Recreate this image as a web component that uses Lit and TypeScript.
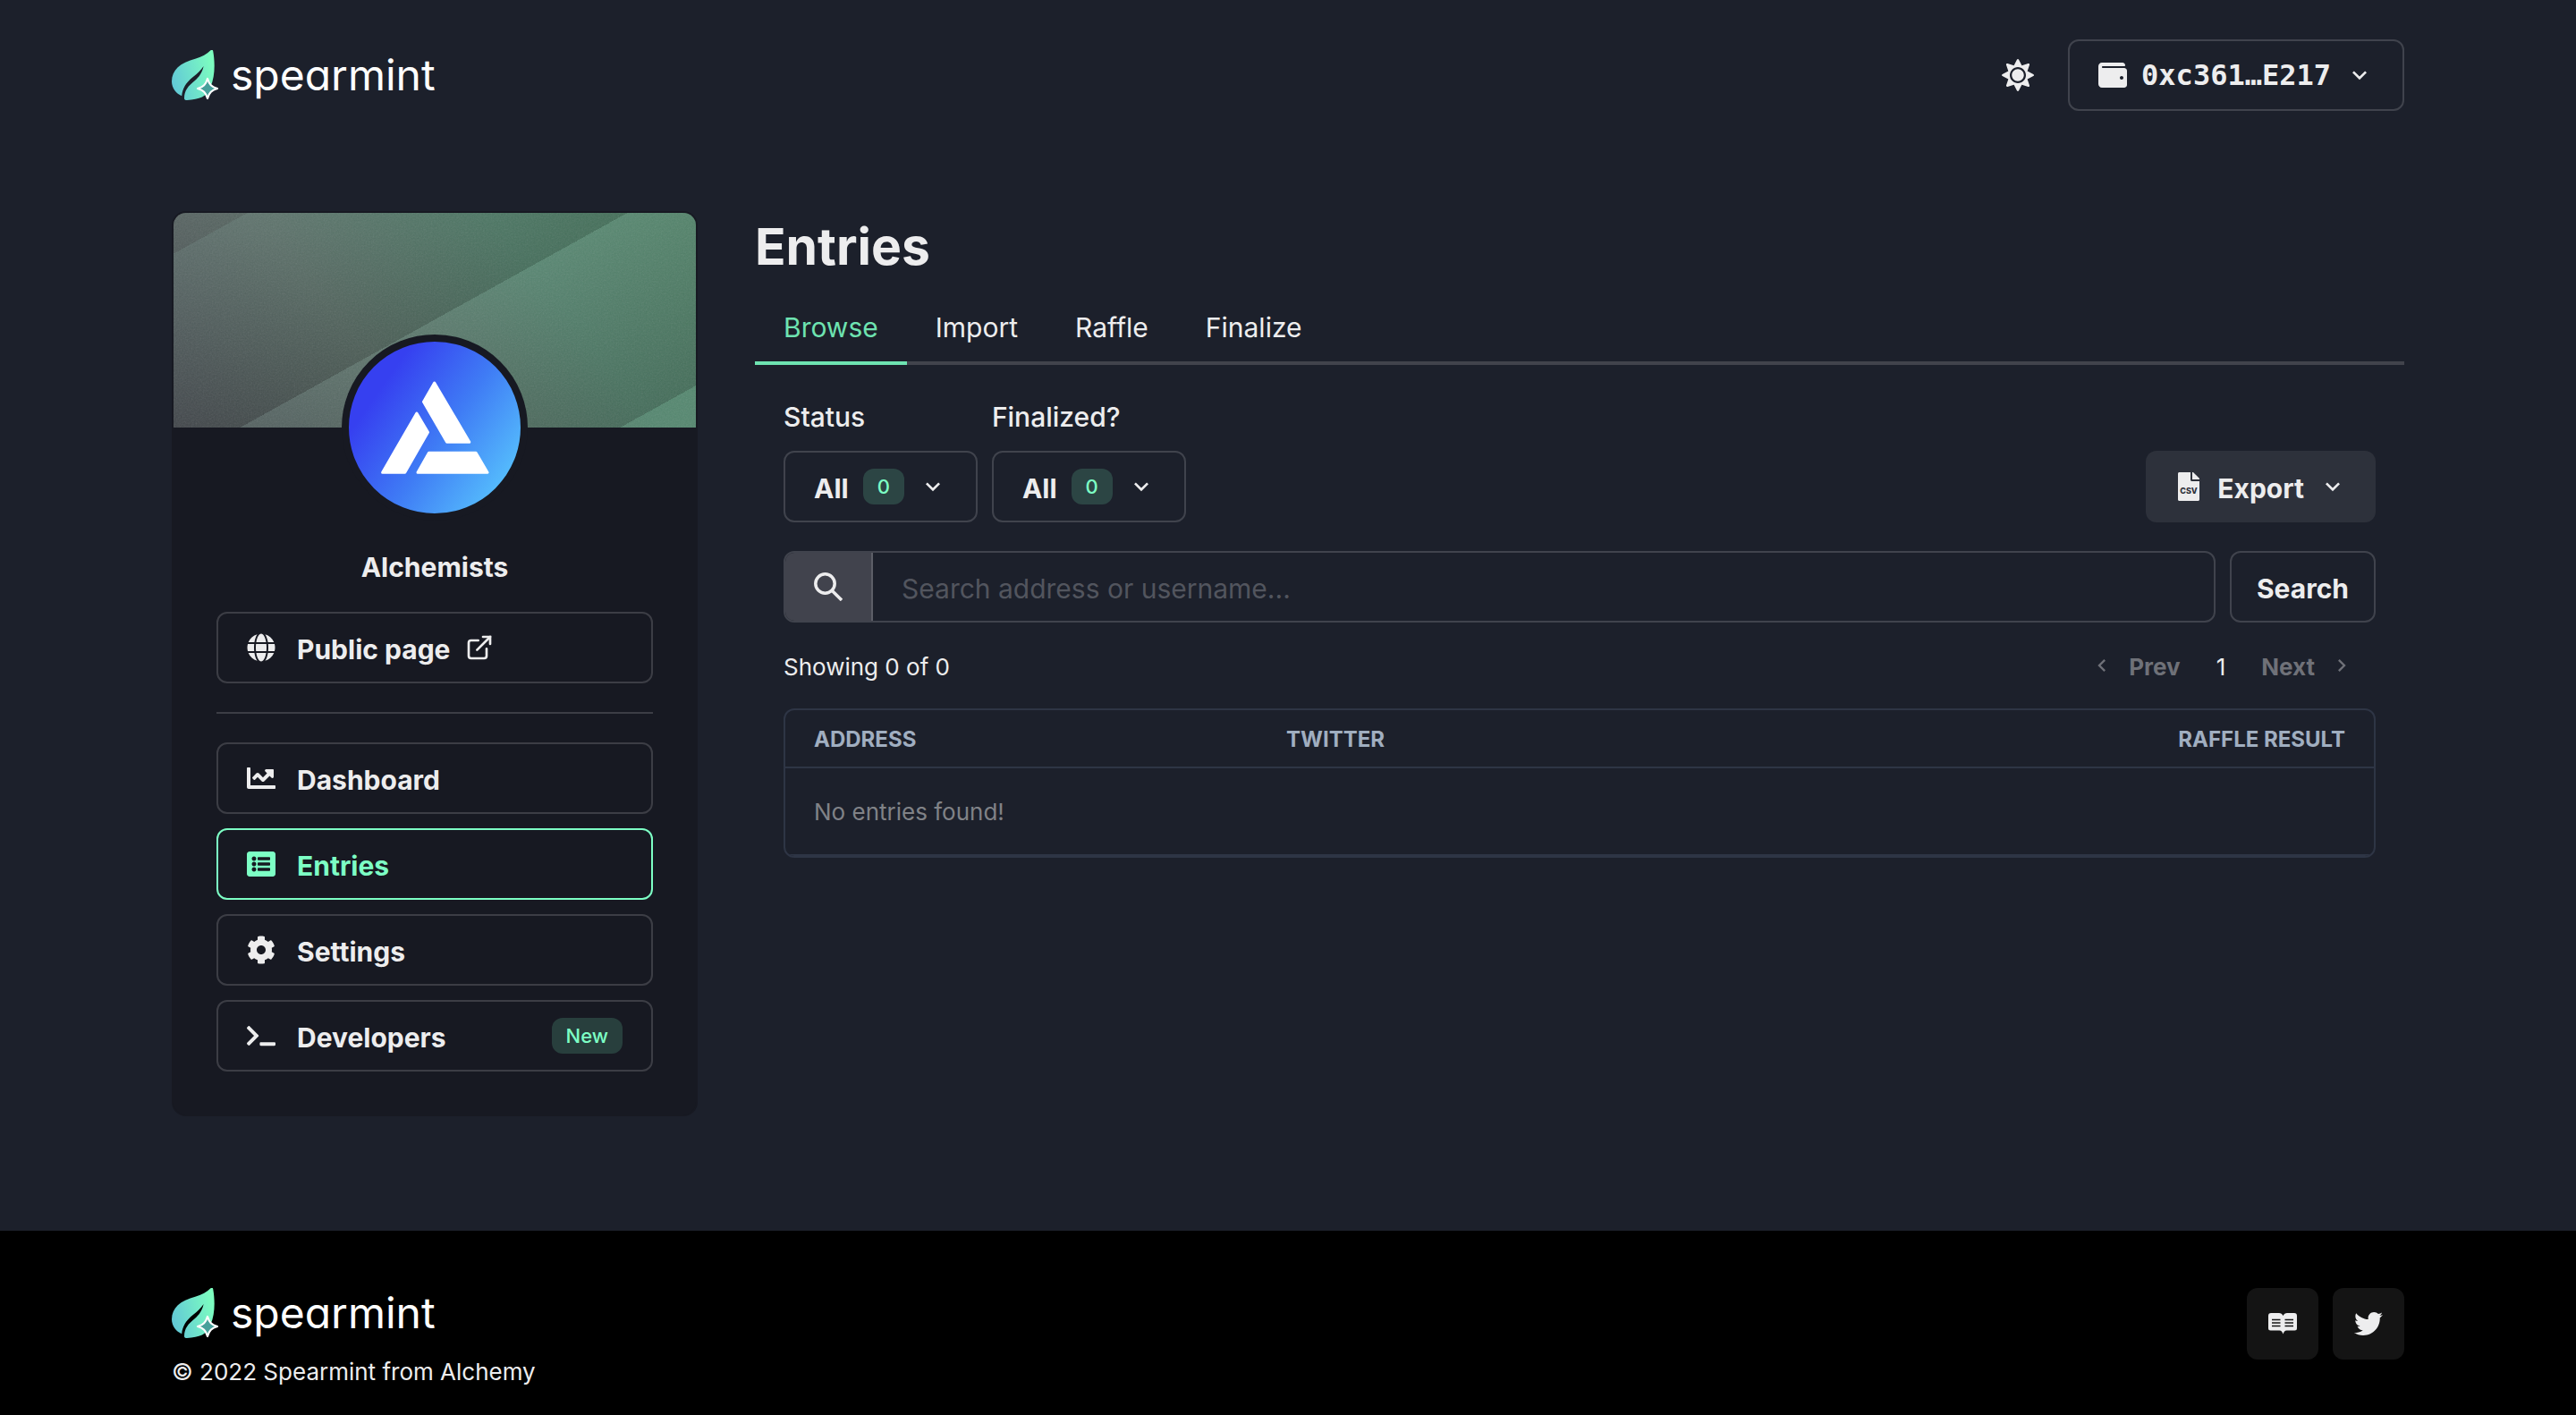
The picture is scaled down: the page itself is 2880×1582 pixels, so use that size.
import { LitElement, html, svg, css, nothing } from "lit";
import { customElement, property } from "lit/decorators.js";
import { classMap } from "lit/directives/class-map.js";

type Glyph = { box: string; d: string };

const glyphs: Record<string, Glyph> = {
  sun: {
    box: "0 0 512 512",
    d: "M256 160c-52.9 0-96 43.1-96 96s43.1 96 96 96 96-43.1 96-96-43.1-96-96-96zm246.4 80.5l-94.7-47.3 33.5-100.4c4.5-13.6-8.4-26.5-21.9-21.9l-100.4 33.5-47.4-94.8c-6.4-12.8-24.6-12.8-31 0l-47.3 94.7L92.7 70.8c-13.6-4.5-26.5 8.4-21.9 21.9l33.5 100.4-94.7 47.4c-12.8 6.4-12.8 24.6 0 31l94.7 47.3-33.5 100.5c-4.5 13.6 8.4 26.5 21.9 21.9l100.4-33.5 47.3 94.7c6.4 12.8 24.6 12.8 31 0l47.3-94.7 100.4 33.5c13.6 4.5 26.5-8.4 21.9-21.9l-33.5-100.4 94.7-47.3c13-6.5 13-24.7.2-31.1zm-155.9 106c-49.9 49.9-131.1 49.9-181 0-49.9-49.9-49.9-131.1 0-181 49.9-49.9 131.1-49.9 181 0 49.9 49.9 49.9 131.1 0 181z",
  },
  wallet: {
    box: "0 0 512 512",
    d: "M461.2 128H80c-8.84 0-16-7.16-16-16s7.16-16 16-16h384c8.84 0 16-7.16 16-16 0-26.51-21.49-48-48-48H64C28.65 32 0 60.65 0 96v320c0 35.35 28.65 64 64 64h397.2c28.02 0 50.8-21.53 50.8-48V176c0-26.47-22.78-48-50.8-48zM416 336c-17.67 0-32-14.33-32-32s14.33-32 32-32 32 14.33 32 32-14.33 32-32 32z",
  },
  globe: {
    box: "0 0 496 512",
    d: "M336.5 160C322 70.7 287.8 8 248 8s-74 62.7-88.5 152h177zM152 256c0 22.2 1.2 43.5 3.3 64h185.3c2.1-20.5 3.3-41.8 3.3-64s-1.2-43.5-3.3-64H155.3c-2.1 20.5-3.3 41.8-3.3 64zm324.7-96c-28.6-67.9-86.5-120.4-158-141.6 24.4 33.8 41.2 84.7 50 141.6h108zM177.2 18.4C105.8 39.6 47.8 92.1 19.3 160h108c8.7-56.9 25.5-107.8 49.9-141.6zM487.4 192H372.7c2.1 21 3.3 42.5 3.3 64s-1.2 43-3.3 64h114.6c5.5-20.5 8.6-41.8 8.6-64s-3.1-43.5-8.5-64zM120 256c0-21.5 1.2-43 3.3-64H8.6C3.2 212.5 0 233.8 0 256s3.2 43.5 8.6 64h114.6c-2-21-3.2-42.5-3.2-64zm39.5 96c14.5 89.3 48.7 152 88.5 152s74-62.7 88.5-152h-177zm159.3 141.6c71.4-21.2 129.4-73.7 158-141.6h-108c-8.8 56.9-25.6 107.8-50 141.6zM19.3 352c28.6 67.9 86.5 120.4 158 141.6-24.4-33.8-41.2-84.7-50-141.6h-108z",
  },
  chart: {
    box: "0 0 512 512",
    d: "M496 384H64V80c0-8.84-7.16-16-16-16H16C7.16 64 0 71.16 0 80v336c0 17.67 14.33 32 32 32h464c8.84 0 16-7.16 16-16v-32c0-8.84-7.16-16-16-16zM464 96H345.94c-21.38 0-32.09 25.85-16.97 40.97l32.4 32.4L288 242.75l-73.37-73.37c-12.5-12.5-32.76-12.5-45.25 0l-68.69 68.69c-6.25 6.25-6.25 16.38 0 22.63l22.62 22.62c6.25 6.25 16.38 6.25 22.63 0L192 237.25l73.37 73.37c12.5 12.5 32.76 12.5 45.25 0l96-96 32.4 32.4c15.12 15.12 40.97 4.41 40.97-16.97V112c.01-8.84-7.15-16-15.99-16z",
  },
  list: {
    box: "0 0 512 512",
    d: "M464 480H48c-26.51 0-48-21.49-48-48V80c0-26.51 21.49-48 48-48h416c26.51 0 48 21.49 48 48v352c0 26.51-21.49 48-48 48zM128 120c-22.091 0-40 17.909-40 40s17.909 40 40 40 40-17.909 40-40-17.909-40-40-40zm0 96c-22.091 0-40 17.909-40 40s17.909 40 40 40 40-17.909 40-40-17.909-40-40-40zm0 96c-22.091 0-40 17.909-40 40s17.909 40 40 40 40-17.909 40-40-17.909-40-40-40zm288-136v-32c0-6.627-5.373-12-12-12H204c-6.627 0-12 5.373-12 12v32c0 6.627 5.373 12 12 12h200c6.627 0 12-5.373 12-12zm0 96v-32c0-6.627-5.373-12-12-12H204c-6.627 0-12 5.373-12 12v32c0 6.627 5.373 12 12 12h200c6.627 0 12-5.373 12-12zm0 96v-32c0-6.627-5.373-12-12-12H204c-6.627 0-12 5.373-12 12v32c0 6.627 5.373 12 12 12h200c6.627 0 12-5.373 12-12z",
  },
  cog: {
    box: "0 0 512 512",
    d: "M487.4 315.7l-42.6-24.6c4.3-23.2 4.3-47 0-70.2l42.6-24.6c4.9-2.8 7.1-8.6 5.5-14-11.1-35.6-30-67.8-54.7-94.6-3.8-4.1-10-5.1-14.8-2.3L380.8 110c-17.9-15.4-38.5-27.3-60.8-35.1V25.8c0-5.6-3.9-10.5-9.4-11.7-36.7-8.2-74.3-7.8-109.2 0-5.5 1.2-9.4 6.1-9.4 11.7V75c-22.2 7.9-42.8 19.8-60.8 35.1L88.7 85.5c-4.9-2.8-11-1.9-14.8 2.3-24.7 26.7-43.6 58.9-54.7 94.6-1.7 5.4.6 11.2 5.5 14L67.3 221c-4.3 23.2-4.3 47 0 70.2l-42.6 24.6c-4.9 2.8-7.1 8.6-5.5 14 11.1 35.6 30 67.8 54.7 94.6 3.8 4.1 10 5.1 14.8 2.3l42.6-24.6c17.9 15.4 38.5 27.3 60.8 35.1v49.2c0 5.6 3.9 10.5 9.4 11.7 36.7 8.2 74.3 7.8 109.2 0 5.5-1.2 9.4-6.1 9.4-11.7v-49.2c22.2-7.9 42.8-19.8 60.8-35.1l42.6 24.6c4.9 2.8 11 1.9 14.8-2.3 24.7-26.7 43.6-58.9 54.7-94.6 1.5-5.5-.7-11.3-5.6-14.1zM256 336c-44.1 0-80-35.9-80-80s35.9-80 80-80 80 35.9 80 80-35.9 80-80 80z",
  },
  terminal: {
    box: "0 0 640 512",
    d: "M257.981 272.971L63.638 467.314c-9.373 9.373-24.569 9.373-33.941 0L7.029 444.647c-9.357-9.357-9.375-24.522-.04-33.901L161.011 256 6.99 101.255c-9.335-9.379-9.317-24.544.04-33.901l22.667-22.667c9.373-9.373 24.569-9.373 33.941 0L257.981 239.03c9.373 9.372 9.373 24.568 0 33.941zM640 456v-32c0-13.255-10.745-24-24-24H312c-13.255 0-24 10.745-24 24v32c0 13.255 10.745 24 24 24h304c13.255 0 24-10.745 24-24z",
  },
  twitter: {
    box: "0 0 512 512",
    d: "M459.37 151.716c.325 4.548.325 9.097.325 13.645 0 138.72-105.583 298.558-298.558 298.558-59.452 0-114.68-17.219-161.137-47.106 8.447.974 16.568 1.299 25.34 1.299 49.055 0 94.213-16.568 130.274-44.832-46.132-.975-84.792-31.188-98.112-72.772 6.498.974 12.995 1.624 19.818 1.624 9.421 0 18.843-1.3 27.614-3.573-48.081-9.747-84.143-51.98-84.143-102.985v-1.299c13.969 7.797 30.214 12.67 47.431 13.319-28.264-18.843-46.781-51.005-46.781-87.391 0-19.492 5.197-37.36 14.294-52.954 51.655 63.675 129.3 105.258 216.365 109.807-1.624-7.797-2.599-15.918-2.599-24.04 0-57.828 46.782-104.934 104.934-104.934 30.213 0 57.502 12.67 76.67 33.137 23.715-4.548 46.456-13.32 66.599-25.34-7.798 24.366-24.366 44.833-46.132 57.827 21.117-2.273 41.584-8.122 60.426-16.243-14.292 20.791-32.161 39.308-52.628 54.253z",
  },
  down: { box: "0 0 24 24", d: "M16.59 8.59L12 13.17 7.41 8.59 6 10l6 6 6-6z" },
  left: { box: "0 0 24 24", d: "M15.41 7.41L14 6l-6 6 6 6 1.41-1.41L10.83 12z" },
  right: { box: "0 0 24 24", d: "M10 6L8.59 7.41 13.17 12l-4.58 4.59L10 18l6-6z" },
};

const drawn: Record<string, { box: string; body: unknown }> = {
  external: {
    box: "0 0 24 24",
    body: svg`<g fill="none" stroke="currentColor" stroke-width="2" stroke-linecap="round">
      <path d="M15 3h6v6" /><path d="M10 14L21 3" />
      <path d="M18 13v6a2 2 0 0 1-2 2H5a2 2 0 0 1-2-2V8a2 2 0 0 1 2-2h6" /></g>`,
  },
  search: {
    box: "0 0 32 32",
    body: svg`<g fill="none" stroke="currentColor" stroke-width="3.5">
      <circle cx="12.5" cy="12.5" r="10.700" /><path d="M20.4 20.4L31 31" /></g>`,
  },
  csv: {
    box: "0 0 24 32",
    body: svg`<path fill="currentColor" d="M14 8.5V0H1.5C.7 0 0 .7 0 1.5v29c0 .8.7 1.5 1.5 1.5h21c.8 0 1.5-.7 1.5-1.5V10h-8.500c-.8 0-1.500-.7-1.500-1.500z" />
      <path fill="currentColor" d="M24 7.600V8h-8V0h.400c.4 0 .8.200 1.100.400l6.100 6.100c.3.300.4.700.4 1.100z" />
      <text x="12" y="24" text-anchor="middle" font-size="9" font-weight="800" fill="#2e303b">CSV</text>`,
  },
  book: {
    box: "0 0 32 24",
    body: svg`<path fill="currentColor" d="M3 0H12C14 0 15.500 1 16.500 3C17.500 1 19 0 21 0H29A3 3 0 0 1 32 3V17A2.500 2.500 0 0 1 29.500 19.500H20.500C18.500 19.500 17.500 21 16.500 23.500C15.500 21 14.500 19.500 12.500 19.500H2.500A2.500 2.500 0 0 1 0 17V3A3 3 0 0 1 3 0Z" />
      <path fill="none" stroke="#141414" stroke-width="1.400" d="M4 7.500H13.500M4 11H13.500M4 14.500H13.500M18.500 7.500H28M18.500 11H28M18.500 14.500H28" />`,
  },
};

@customElement("ui-icon")
class UiIcon extends LitElement {
  @property() name = "";

  static styles = css`
    :host {
      display: inline-flex;
      flex: none;
      width: 32px;
      height: 32px;
    }
    svg {
      width: 100%;
      height: 100%;
      font-family: Inter, "Liberation Sans", sans-serif;
    }
  `;

  render() {
    const glyph = glyphs[this.name];
    const shape = drawn[this.name];
    return html`<svg viewBox=${glyph ? glyph.box : shape.box} aria-hidden="true">
      ${glyph ? svg`<path fill="currentColor" d=${glyph.d} />` : shape.body}
    </svg>`;
  }
}

@customElement("brand-logo")
class BrandLogo extends LitElement {
  static styles = css`
    :host {
      display: block;
    }
    .link {
      display: flex;
      align-items: center;
      gap: 12px;
      width: max-content;
      color: #fff;
      text-decoration: none;
    }
    .leaf {
      width: 54px;
      height: 57px;
      margin-bottom: -1px;
    }
    .word {
      font: 400 48px/56px Inter, "Liberation Sans", sans-serif;
      font-feature-settings: "cv11" 1;
    }
  `;

  render() {
    return html`<a class="link" href="#">
      <svg class="leaf" viewBox="12 16 54 57" aria-hidden="true">
        <defs>
          <linearGradient id="mint" x1="0" y1="0.6" x2="1" y2="0.3">
            <stop offset="0" stop-color="#62c9d6" />
            <stop offset="1" stop-color="#7dffbf" />
          </linearGradient>
        </defs>
        <path
          fill="url(#mint)"
          d="M55.500 16.300C51 20.500 46 23.500 39 25.500C21 30 12 38.500 12 51C12 58.500 17 64.500 23.200 67.300C24 58.500 28 52.500 35.500 46.300C41 42 44.500 38.500 47.600 34C46 41.500 42.500 46 38 50C30.500 56 26 61 26 70C26 71.600 27 72 29 72C43 71 51.500 68.500 55.500 57C60.500 45 60.500 30 58.200 17C57.800 15.500 56.800 15.200 55.500 16.300Z"
        />
        <path
          fill="#47a09b"
          stroke="#fff"
          stroke-width="2.200"
          stroke-linejoin="round"
          d="M52 48C54 54.500 56.500 57 63 59C56.500 61 54 63.500 52 70C50 63.500 47.500 61 41 59C47.500 57 50 54.500 52 48Z"
        />
      </svg>
      <span class="word">spearmint</span>
    </a>`;
  }
}

const navItems = [
  { label: "Dashboard", icon: "chart", tag: "", active: false },
  { label: "Entries", icon: "list", tag: "", active: true },
  { label: "Settings", icon: "cog", tag: "", active: false },
  { label: "Developers", icon: "terminal", tag: "New", active: false },
];

const tabs = ["Browse", "Import", "Raffle", "Finalize"];

const filters = [
  { id: "status", label: "Status", value: "All", count: 0 },
  { id: "finalized", label: "Finalized?", value: "All", count: 0 },
];

@customElement("app-root")
class AppRoot extends LitElement {
  static styles = css`
    :host {
      display: block;
      --line: rgba(255, 255, 255, 0.16);
      --mint: #7dffc5;
      --text: #ededee;
    }
    * {
      box-sizing: border-box;
    }
    .page {
      display: flex;
      flex-direction: column;
      min-height: 100vh;
      background: #1c202b;
      color: var(--text);
      font: 400 30px/48px Inter, "Liberation Sans", sans-serif;
    }
    .wrap {
      width: 100%;
      max-width: 2560px;
      margin: 0 auto;
      padding: 0 32px;
    }
    .header {
      display: flex;
      align-items: center;
      justify-content: space-between;
      padding-top: 44px;
      padding-bottom: 44px;
    }
    .tools {
      display: flex;
      align-items: center;
      gap: 38px;
    }
    button,
    input {
      margin: 0;
      border: 0;
      padding: 0;
      background: none;
      color: inherit;
      font: inherit;
    }
    .theme {
      display: flex;
    }
    .theme ui-icon {
      width: 36px;
      height: 36px;
    }
    .btn {
      display: flex;
      align-items: center;
      gap: 16px;
      height: 80px;
      padding: 0 32px;
      border: 2px solid var(--line);
      border-radius: 12px;
      color: inherit;
      font-weight: 700;
      text-decoration: none;
    }
    .text {
      padding-top: 4px;
    }
    .wallet {
      font-family: "DejaVu Sans Mono", monospace;
      font-size: 32px;
    }
    .main {
      display: flex;
      align-items: flex-start;
      gap: 64px;
      padding-top: 68px;
      padding-bottom: 128px;
    }
    .card {
      flex: none;
      width: 588px;
      border: 2px solid #171922;
      border-radius: 16px;
      background: #171922;
      overflow: hidden;
    }
    .banner {
      height: 240px;
      background: linear-gradient(
          151deg,
          rgba(160, 180, 180, 0.12) 0,
          rgba(130, 150, 150, 0.08) 40px,
          rgba(160, 205, 195, 0.16) 40px,
          rgba(20, 40, 30, 0.14) 246px,
          rgba(150, 205, 185, 0.15) 246px,
          rgba(20, 40, 30, 0.16) 452px,
          rgba(130, 215, 175, 0.14) 452px
        ),
        linear-gradient(52deg, #45464d 0%, #55655f 36%, #4e7a66 70%, #4d7d63 100%);
    }
    .grain {
      display: block;
      width: 100%;
      height: 100%;
      opacity: 0.14;
    }
    .avatar {
      display: block;
      position: relative;
      width: 208px;
      height: 208px;
      margin: -104px auto 28px;
      border: 8px solid #171922;
      border-radius: 50%;
      background: linear-gradient(125deg, #3640f0 22%, #3f7cf5 55%, #57c2fd 90%);
    }
    .team {
      margin: 0 0 26px;
      font-size: 30px;
      line-height: 48px;
      font-weight: 700;
      text-align: center;
    }
    .nav {
      display: flex;
      flex-direction: column;
      gap: 16px;
      padding: 0 48px 48px;
    }
    .nav .btn {
      gap: 24px;
    }
    .nav .public {
      gap: 16px;
    }
    .public ui-icon:first-child {
      margin-right: 8px;
    }
    .rule {
      width: 100%;
      height: 2px;
      margin: 16px 0;
      border: 0;
      background: var(--line);
    }
    .nav .active {
      border-color: var(--mint);
      color: var(--mint);
    }
    .badge {
      padding: 0 16px;
      border-radius: 12px;
      background: rgba(125, 255, 197, 0.17);
      color: var(--mint);
      font-size: 22px;
      line-height: 40px;
      font-weight: 500;
    }
    .nav .badge {
      margin-left: auto;
    }
    .content {
      flex: 1;
      min-width: 0;
    }
    .title {
      margin: 0 0 8px;
      font-size: 57px;
      line-height: 80px;
      font-weight: 700;
    }
    .tabs {
      display: flex;
      border-bottom: 4px solid #41434c;
    }
    .tab {
      margin-bottom: -4px;
      padding: 18px 32px 14px;
      border-bottom: 4px solid transparent;
    }
    .tab.on {
      border-color: #6ee3b1;
      color: #6ee3b1;
    }
    .panel {
      display: flex;
      flex-direction: column;
      gap: 32px;
      padding: 32px;
    }
    .filters {
      display: flex;
      align-items: flex-end;
      gap: 16px;
    }
    .filter {
      display: flex;
      flex-direction: column;
      gap: 14px;
      padding-top: 2px;
    }
    .filter label {
      font-weight: 500;
    }
    .export {
      margin-left: auto;
      border: 0;
      background: rgba(255, 255, 255, 0.08);
    }
    .searchbar {
      display: flex;
      gap: 16px;
    }
    .field {
      display: flex;
      flex: 1;
      height: 80px;
      border: 2px solid var(--line);
      border-radius: 12px;
      overflow: hidden;
    }
    .addon {
      display: flex;
      align-items: center;
      padding: 0 32px;
      border-right: 2px solid #5c5e67;
      background: #41434d;
    }
    .field input {
      flex: 1;
      min-width: 0;
      padding: 4px 32px 0;
      outline: 0;
    }
    .field input::placeholder {
      color: #52555e;
      opacity: 1;
    }
    .searchbar > .btn {
      padding: 0 28px;
    }
    .results {
      display: flex;
      flex-direction: column;
      gap: 16px;
      margin-top: -16px;
      font-size: 26px;
      line-height: 42px;
    }
    .pager {
      display: flex;
      align-items: center;
      justify-content: space-between;
    }
    .pages {
      display: flex;
      align-items: center;
      gap: 16px;
    }
    .step {
      display: flex;
      align-items: center;
      gap: 16px;
      height: 64px;
      padding: 0 24px;
      color: #6f7178;
      font-weight: 700;
    }
    .step ui-icon {
      width: 28px;
      height: 28px;
    }
    .frame {
      border: 2px solid #2e3545;
      border-radius: 12px;
      overflow: hidden;
    }
    table {
      width: 100%;
      border-collapse: separate;
      border-spacing: 0;
      table-layout: fixed;
    }
    .first {
      width: 528px;
    }
    th,
    td {
      padding: 2px 32px 0;
      border-bottom: 2px solid #2e3545;
      text-align: left;
    }
    th {
      height: 65px;
      color: #a0aec0;
      font-size: 24px;
      line-height: 32px;
      font-weight: 700;
      text-transform: uppercase;
    }
    th.end {
      text-align: right;
    }
    td {
      height: 98px;
      color: #808287;
    }
    .footer {
      flex: 1;
      background: #000;
    }
    .foot {
      display: flex;
      align-items: flex-start;
      justify-content: space-between;
      padding-top: 64px;
      padding-bottom: 24px;
    }
    .copy {
      margin: 18px 0 0;
      font-size: 26px;
      line-height: 40px;
    }
    .links {
      display: flex;
      gap: 16px;
    }
    .square {
      display: flex;
      align-items: center;
      justify-content: center;
      width: 80px;
      height: 80px;
      border-radius: 12px;
      background: #141414;
      color: inherit;
    }
  `;

  private renderSidebar() {
    return html`<aside class="card">
      <div class="banner">
        <svg class="grain" aria-hidden="true">
          <filter id="noise">
            <feTurbulence type="fractalNoise" baseFrequency="0.6" numOctaves="2" />
            <feColorMatrix type="saturate" values="0" />
          </filter>
          <rect width="100%" height="100%" filter="url(#noise)" />
        </svg>
      </div>
      <svg class="avatar" viewBox="0 0 192 192" role="img" aria-label="Alchemists">
        <g fill="#fff" stroke="#fff" stroke-width="3" stroke-linejoin="round">
          <path d="M95.700 46L83.500 67.300L109.600 112.200H134.800Z" />
          <path d="M75.900 80L88.500 101.300L62.700 146.200H37.600Z" />
          <path d="M89.500 124.200H142.100L155 146.200H77Z" />
        </g>
      </svg>
      <h2 class="team">Alchemists</h2>
      <nav class="nav">
        <a class="btn public" href="#public">
          <ui-icon name="globe"></ui-icon>
          <span class="text">Public page</span>
          <ui-icon name="external"></ui-icon>
        </a>
        <hr class="rule" />
        ${navItems.map(
          (item) => html`<a
            class=${classMap({ btn: true, active: item.active })}
            href="#${item.label.toLowerCase()}"
            aria-current=${item.active ? "page" : nothing}
          >
            <ui-icon name=${item.icon}></ui-icon>
            <span class="text">${item.label}</span>
            ${item.tag ? html`<span class="badge">${item.tag}</span>` : nothing}
          </a>`
        )}
      </nav>
    </aside>`;
  }

  private renderResults() {
    return html`<div class="results">
      <div class="pager">
        <span class="text">Showing 0 of 0</span>
        <div class="pages">
          <button class="step" disabled><ui-icon name="left"></ui-icon><span class="text">Prev</span></button>
          <span class="text">1</span>
          <button class="step" disabled><span class="text">Next</span><ui-icon name="right"></ui-icon></button>
        </div>
      </div>
      <div class="frame">
        <table>
          <colgroup>
            <col class="first" />
            <col />
            <col />
          </colgroup>
          <thead>
            <tr>
              <th scope="col">Address</th>
              <th scope="col">Twitter</th>
              <th scope="col" class="end">Raffle result</th>
            </tr>
          </thead>
          <tbody>
            <tr>
              <td colspan="3">No entries found!</td>
            </tr>
          </tbody>
        </table>
      </div>
    </div>`;
  }

  render() {
    return html`<div class="page">
      <header class="wrap header">
        <brand-logo></brand-logo>
        <div class="tools">
          <button class="theme" aria-label="Toggle theme"><ui-icon name="sun"></ui-icon></button>
          <button class="btn wallet" aria-haspopup="menu">
            <ui-icon name="wallet"></ui-icon>0xc361…E217<ui-icon name="down"></ui-icon>
          </button>
        </div>
      </header>
      <main class="wrap main">
        ${this.renderSidebar()}
        <section class="content">
          <h1 class="title">Entries</h1>
          <div class="tabs" role="tablist">
            ${tabs.map(
              (tab, i) => html`<button
                class=${classMap({ tab: true, on: i === 0 })}
                role="tab"
                aria-selected=${i === 0 ? "true" : "false"}
              >
                ${tab}
              </button>`
            )}
          </div>
          <div class="panel">
            <div class="filters">
              ${filters.map(
                (f) => html`<div class="filter">
                  <label for=${f.id}>${f.label}</label>
                  <button class="btn" id=${f.id} aria-haspopup="menu">
                    <span class="text">${f.value}</span>
                    <span class="badge">${f.count}</span>
                    <ui-icon name="down"></ui-icon>
                  </button>
                </div>`
              )}
              <button class="btn export" aria-haspopup="menu">
                <ui-icon name="csv"></ui-icon>
                <span class="text">Export</span>
                <ui-icon name="down"></ui-icon>
              </button>
            </div>
            <form class="searchbar" role="search">
              <div class="field">
                <label class="addon" for="query" aria-label="Search entries">
                  <ui-icon name="search"></ui-icon>
                </label>
                <input id="query" type="text" placeholder="Search address or username..." />
              </div>
              <button class="btn" type="button"><span class="text">Search</span></button>
            </form>
            ${this.renderResults()}
          </div>
        </section>
      </main>
      <footer class="footer">
        <div class="wrap foot">
          <div>
            <brand-logo></brand-logo>
            <p class="copy">© 2022 Spearmint from Alchemy</p>
          </div>
          <div class="links">
            <a class="square" href="#docs" aria-label="Documentation"><ui-icon name="book"></ui-icon></a>
            <a class="square" href="#twitter" aria-label="Twitter"><ui-icon name="twitter"></ui-icon></a>
          </div>
        </div>
      </footer>
    </div>`;
  }
}
